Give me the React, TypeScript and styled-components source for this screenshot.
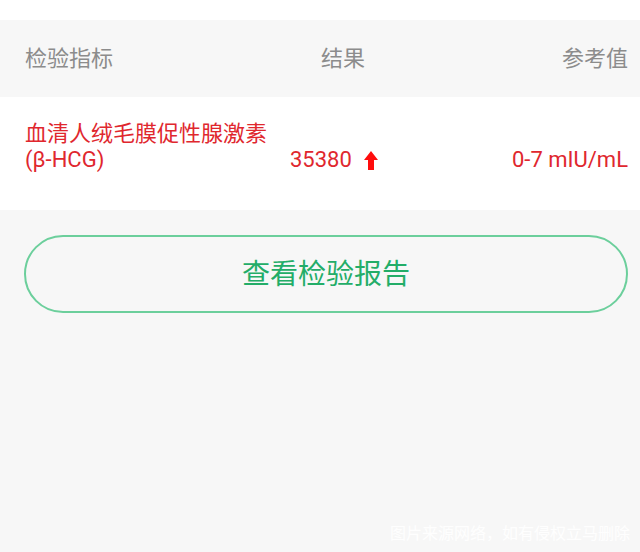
import React, { FC } from "react";
import styled, { createGlobalStyle } from "styled-components";

const GlobalStyle = createGlobalStyle`
  html, body {
    margin: 0;
    padding: 0;
    background: #f7f7f7;
  }
  body {
    font-family: Roboto, "Noto Sans CJK SC", sans-serif;
  }
`;

const Page = styled.div`
  position: relative;
  width: 640px;
  height: 552px;
  background: #f7f7f7;
  overflow: hidden;
`;

const TopBar = styled.div`
  height: 20px;
  background: #ffffff;
`;

const HeaderRow = styled.div`
  display: grid;
  grid-template-columns: 296px 1fr auto;
  align-items: center;
  height: 77px;
  box-sizing: border-box;
  padding: 0 12px 6px 25px;
  font-size: 22px;
  color: #8c8c8c;
`;

const ResultRow = styled.div`
  display: grid;
  grid-template-columns: 265px 1fr auto;
  align-items: end;
  background: #ffffff;
  height: 113px;
  box-sizing: border-box;
  padding: 24px 12px 37px 25px;
  font-size: 22px;
  line-height: 26px;
  color: #e0272e;
`;

const Name = styled.div`
  white-space: nowrap;
`;

const Value = styled.div`
  display: flex;
  align-items: center;
  gap: 12px;
`;

const Range = styled.div`
  text-align: right;
`;

const ButtonWrap = styled.div`
  padding: 25px 12px 0 24px;
`;

const ReportButton = styled.button`
  width: 100%;
  height: 78px;
  box-sizing: border-box;
  padding: 0 0 4px;
  border: 2px solid #6ccf9c;
  border-radius: 39px;
  background: transparent;
  color: #23ad68;
  font-family: "Noto Sans CJK SC", sans-serif;
  font-size: 28px;
  cursor: pointer;
`;

const Watermark = styled.div`
  position: absolute;
  right: 10px;
  bottom: 8px;
  font-family: "Noto Sans CJK SC", sans-serif;
  font-size: 16px;
  color: rgba(255, 255, 255, 0.95);
`;

const UpArrow: FC = () => (
  <svg width="14" height="19" viewBox="0 0 14 19">
    <polygon points="7,0 14,9 10,9 10,19 4,19 4,9 0,9" fill="#ff0d0d" />
  </svg>
);

const App: FC = () => {
  return (
    <Page>
      <GlobalStyle />
      <TopBar />
      <HeaderRow>
        <span>检验指标</span>
        <span>结果</span>
        <span>参考值</span>
      </HeaderRow>
      <ResultRow>
        <Name>
          血清人绒毛膜促性腺激素
          <br />
          (β-HCG)
        </Name>
        <Value>
          35380
          <UpArrow />
        </Value>
        <Range>0-7 mIU/mL</Range>
      </ResultRow>
      <ButtonWrap>
        <ReportButton>查看检验报告</ReportButton>
      </ButtonWrap>
      <Watermark>图片来源网络，如有侵权立马删除</Watermark>
    </Page>
  );
};

export default App;
